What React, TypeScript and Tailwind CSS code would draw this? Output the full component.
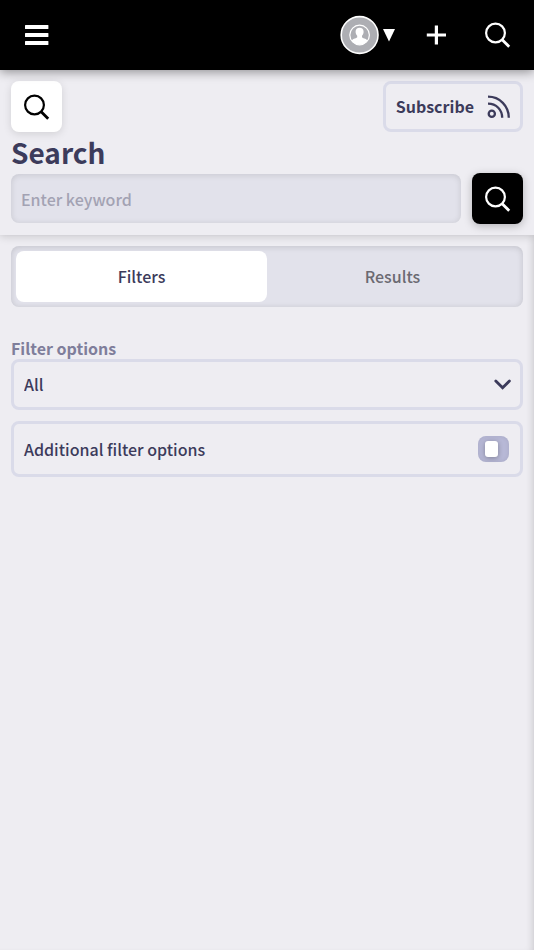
import { useState } from "react";

const focusRing = "focus-visible:outline-2 focus-visible:outline-[#3c3b5b]";

function SearchIcon() {
  return (
    <svg width="28" height="28" viewBox="0 0 28 28" fill="none" stroke="currentColor" aria-hidden="true">
      <circle cx="11.5" cy="12" r="9.4" strokeWidth="2.2" />
      <path d="M18.2 18.7l7 7" strokeWidth="2.8" />
    </svg>
  );
}

function MenuIcon() {
  return (
    <svg width="24" height="20" viewBox="0 0 24 20" fill="currentColor" aria-hidden="true">
      <rect width="23.4" height="4" rx="0.5" />
      <rect y="8" width="23.4" height="4" rx="0.5" />
      <rect y="16" width="23.4" height="4" rx="0.5" />
    </svg>
  );
}

function PlusIcon() {
  return (
    <svg width="20" height="20" viewBox="0 0 20 20" fill="none" stroke="currentColor" strokeWidth="3.2" aria-hidden="true">
      <path d="M10.4 0.4v19.2M0.8 10h19.2" />
    </svg>
  );
}

function Avatar() {
  return (
    <svg width="40" height="40" viewBox="0 0 40 40" aria-hidden="true">
      <circle cx="19.6" cy="20" r="18.4" fill="#adaeb3" stroke="#fff" strokeWidth="1.6" />
      <circle cx="19.6" cy="20" r="9.8" fill="none" stroke="#fff" strokeWidth="1.2" />
      <path
        d="M19.6 12.8c2.5 0 4 1.6 4 4 0 1.7-.7 3.200-1.600 4v1.400c0 .9 4.300 1.200 5.600 3.400A9.800 9.800 0 0 1 19.600 29.800a9.800 9.800 0 0 1-8-4.200c1.300-2.200 5.600-2.500 5.600-3.400v-1.400c-.9-.8-1.600-2.300-1.600-4 0-2.400 1.500-4 4-4z"
        fill="#fff"
      />
    </svg>
  );
}

function FeedIcon() {
  return (
    <svg width="24" height="24" viewBox="0 0 24 24" fill="none" stroke="currentColor" strokeWidth="2.3" aria-hidden="true">
      <circle cx="5.8" cy="18.7" r="3.1" />
      <path d="M2 8.600C10.400 8.600 16.200 14.800 16.200 22.800M2 1.700C13.800 1.700 22.800 11 22.800 22.800" />
    </svg>
  );
}

export default function App() {
  const [tab, setTab] = useState("Filters");

  return (
    <div className="flex min-h-screen flex-col bg-[#eeedf2] font-['Noto_Sans_CJK_SC','Noto_Sans',sans-serif] text-base leading-6 font-medium text-[#3c3b5b]">
      <header className="z-20 flex h-[70px] items-center justify-between bg-black px-[11px] text-white shadow-[0_2px_10px_rgba(0,0,0,0.4)]">
        <button type="button" aria-label="Menu" className={`grid size-[51px] place-items-center ${focusRing}`}>
          <MenuIcon />
        </button>
        <div className="flex items-center gap-[11px]">
          <button type="button" aria-label="Account" className={`flex items-center gap-[3px] ${focusRing}`}>
            <Avatar />
            <svg width="12" height="13" viewBox="0 0 12 13" fill="currentColor" aria-hidden="true">
              <path d="M0 0h12L6 12.5z" />
            </svg>
          </button>
          <div className="flex gap-[11px] pl-1">
            <button type="button" aria-label="Add" className={`grid size-[51px] place-items-center ${focusRing}`}>
              <PlusIcon />
            </button>
            <button type="button" aria-label="Search" className={`grid size-[51px] place-items-center ${focusRing}`}>
              <SearchIcon />
            </button>
          </div>
        </div>
      </header>

      <section className="z-10 bg-[#eeedf2] px-[11px] pt-[11px] pb-[11px] shadow-[0_2px_8px_rgba(0,0,0,0.14)]">
        <div className="flex items-center justify-between">
          <div className="grid size-[51px] place-items-center rounded-lg bg-white text-black shadow-[0_2px_8px_rgba(0,0,0,0.12)]">
            <SearchIcon />
          </div>
          <button
            type="button"
            className={`flex h-[51px] items-center gap-3 rounded-lg border-[3px] border-[#dadbe9] px-[10px] font-bold ${focusRing}`}
          >
            <span className="pb-0.5">Subscribe</span>
            <FeedIcon />
          </button>
        </div>
        <h1 className="text-[28px] leading-[41px] font-bold">Search</h1>
        <form className="flex items-center gap-[11px]" onSubmit={(e) => e.preventDefault()}>
          <input
            type="text"
            aria-label="Keyword"
            placeholder="Enter keyword"
            className="h-[49px] min-w-0 flex-1 rounded-lg bg-[#e2e2eb] px-[10px] shadow-[inset_0_1px_6px_rgba(0,0,0,0.12)] outline-none placeholder:text-[#a3a2b3]"
          />
          <button
            type="submit"
            aria-label="Search"
            className={`grid size-[51px] place-items-center rounded-lg bg-black text-white shadow-[0_2px_8px_rgba(0,0,0,0.25)] ${focusRing}`}
          >
            <SearchIcon />
          </button>
        </form>
      </section>

      <main className="flex flex-1 flex-col px-[11px] pt-[11px] shadow-[inset_-6px_0_8px_-6px_rgba(0,0,0,0.2)]">
        <div role="tablist" className="flex rounded-lg bg-[#e2e2eb] p-[5px] shadow-[inset_0_1px_6px_rgba(0,0,0,0.14)]">
          {["Filters", "Results"].map((name) => (
            <button
              key={name}
              type="button"
              role="tab"
              aria-selected={tab === name}
              onClick={() => setTab(name)}
              className={`h-[51px] flex-1 rounded-lg pb-0.5 ${tab === name ? "bg-white" : "text-[#6b6a72]"} ${focusRing}`}
            >
              {name}
            </button>
          ))}
        </div>

        <label htmlFor="filter" className="mt-[30px] leading-[22px] font-bold text-[#7f7e9b]">
          Filter options
        </label>
        <div className="relative">
          <select
            id="filter"
            className={`block h-[51px] w-full appearance-none rounded-lg border-[3px] border-[#dadbe9] bg-transparent px-[10px] pb-0.5 ${focusRing}`}
          >
            <option>All</option>
          </select>
          <svg
            className="pointer-events-none absolute inset-y-0 right-3 my-auto"
            width="17"
            height="11"
            viewBox="0 0 17 11"
            fill="none"
            stroke="currentColor"
            strokeWidth="2.8"
            strokeLinecap="round"
            aria-hidden="true"
          >
            <path d="M1.8 2l6.800 6.800 6.800-6.800" />
          </svg>
        </div>

        <label className="mt-[11px] flex h-14 items-center justify-between rounded-lg border-[3px] border-[#dadbe9] pr-[11px] pl-[10px]">
          Additional filter options
          <input
            type="checkbox"
            className={`h-[26px] w-[31px] appearance-none rounded-lg bg-[#b7b8d6] shadow-[inset_0_0_4px_rgba(0,0,0,0.08)] before:mt-[5px] before:ml-[7px] before:block before:h-4 before:w-[13px] before:rounded-[3px] before:bg-white before:shadow-[0_1px_5px_rgba(0,0,0,0.3)] checked:before:ml-3 ${focusRing}`}
          />
        </label>
      </main>
    </div>
  );
}
